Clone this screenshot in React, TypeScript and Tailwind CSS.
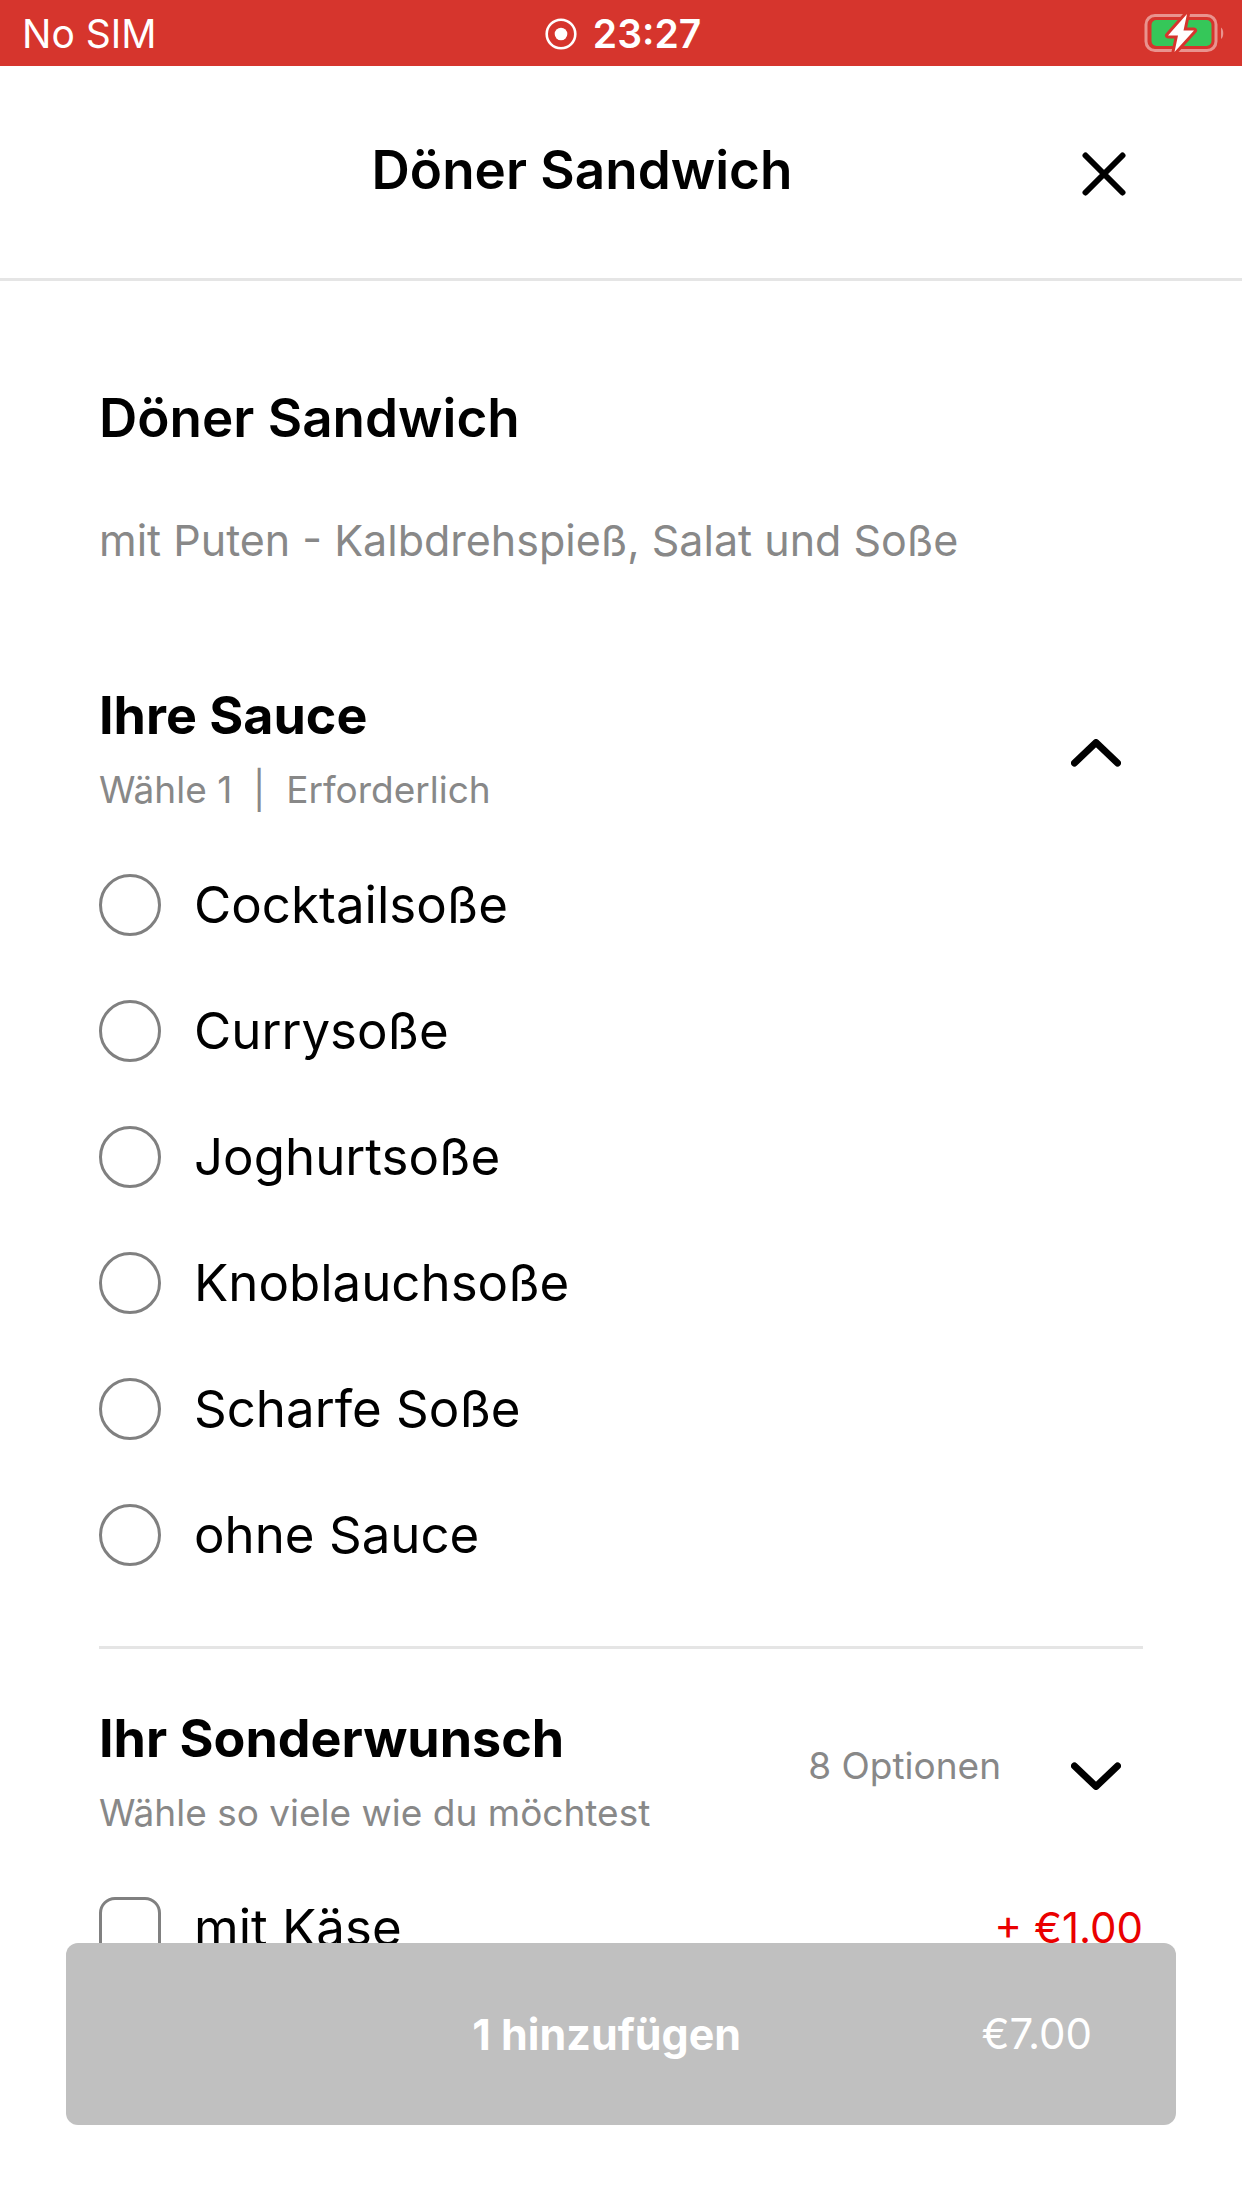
import { useState } from "react"

const sauces = [
    "Cocktailsoße",
    "Currysoße",
    "Joghurtsoße",
    "Knoblauchsoße",
    "Scharfe Soße",
    "ohne Sauce",
]

const StatusBar = () => {
    return (
        <div className="grid h-[66px] grid-cols-3 items-center bg-[#d6352d] pt-[2px] pl-[22px] pr-[18px] text-[39px] leading-[44px] text-white">
            <span>No SIM</span>
            <span className="flex items-center justify-center gap-4 font-semibold">
                <svg className="size-8" viewBox="0 0 32 32" aria-hidden="true">
                    <circle cx="16" cy="16" r="14.3" fill="none" stroke="white" strokeWidth="2.6" />
                    <circle cx="16" cy="16" r="6.3" fill="white" />
                </svg>
                23:27
            </span>
            <Battery />
        </div>
    )
}

const Battery = () => {
    return (
        <svg className="h-10 w-20 justify-self-end" viewBox="0 0 80 40" aria-hidden="true">
            <rect x="2" y="1.500" width="70" height="35" rx="9" fill="none" stroke="#e9938e" strokeWidth="3" />
            <path d="M77 13.500C80 15.500 80 23 77 25Z" fill="#e9938e" />
            <rect x="7.500" y="6" width="60" height="26" rx="5" fill="#35c759" />
            <path
                d="M43 0L24 21.500H34L30.500 38L50 16.500H39.500Z"
                fill="white"
                stroke="#d6352d"
                strokeWidth="6"
                strokeLinejoin="round"
                paintOrder="stroke"
            />
        </svg>
    )
}

const Chevron = ({ open }: { open: boolean }) => {
    return (
        <svg className="h-[28px] w-[50px]" viewBox="0 0 50 28" fill="none" stroke="black" strokeWidth="7" strokeLinecap="round" strokeLinejoin="round" aria-hidden="true">
            {open ? <path d="M3.500 24L25 3.500L46.500 24" /> : <path d="M3.500 4L25 24.500L46.500 4" />}
        </svg>
    )
}

type SectionHeaderProps = {
    title: string
    hint: string
    open: boolean
    count?: string
}

const SectionHeader = ({ title, hint, open, count }: SectionHeaderProps) => {
    return (
        <div className="flex items-center">
            <div className="flex-1">
                <h3 className="text-[52px] leading-[64px] font-bold">{title}</h3>
                <p className="mt-5 text-[37px] leading-[44px] whitespace-pre text-[#888888]">{hint}</p>
            </div>
            {count && <span className="pb-[10px] text-[37px] leading-[44px] text-[#888888]">{count}</span>}
            <button type="button" aria-label={title} aria-expanded={open} className="ml-12 flex w-[94px] justify-center pt-[10px]">
                <Chevron open={open} />
            </button>
        </div>
    )
}

const App = () => {
    const [sauce, setSauce] = useState("")

    return (
        <div className="min-h-screen bg-white font-[Inter,'Liberation_Sans',sans-serif] text-black">
            <StatusBar />
            <header className="flex items-center border-b-[3px] border-[#e5e5e5] px-[99px] py-[67px]">
                <h1 className="flex-1 pb-1 text-center text-[53px] leading-[64px] font-semibold">Döner Sandwich</h1>
                <button type="button" aria-label="Schließen" className="flex size-[78px] items-center justify-center pt-1">
                    <svg className="size-11" viewBox="0 0 44 44" stroke="black" strokeWidth="6" strokeLinecap="round" aria-hidden="true">
                        <path d="M3.500 3.500L40.500 40.500M40.500 3.500L3.500 40.500" />
                    </svg>
                </button>
            </header>

            <main className="px-[99px] pt-[105px]">
                <h2 className="text-[53px] leading-[64px] font-semibold">Döner Sandwich</h2>
                <p className="mt-[66px] text-[43px] leading-[48px] text-[#888888]">mit Puten - Kalbdrehspieß, Salat und Soße</p>

                <section className="mt-[120px] border-b-[3px] border-[#e5e5e5] pb-20">
                    <SectionHeader title="Ihre Sauce" hint="Wähle 1  |  Erforderlich" open />
                    <div className="mt-[62px] flex flex-col gap-16">
                        {sauces.map((name) => (
                            <label key={name} className="flex items-center gap-[33px] text-[51px] leading-[62px]">
                                <input
                                    type="radio"
                                    name="sauce"
                                    checked={sauce === name}
                                    onChange={() => setSauce(name)}
                                    className="size-[62px] appearance-none rounded-full border-3 border-[#808080] checked:border-[16px] checked:border-black"
                                />
                                {name}
                            </label>
                        ))}
                    </div>
                </section>

                <section className="mt-[58px]">
                    <SectionHeader title="Ihr Sonderwunsch" hint="Wähle so viele wie du möchtest" open={false} count="8 Optionen" />
                    <div className="mt-[62px] flex items-center justify-between">
                        <label className="flex items-center gap-[33px] text-[51px] leading-[62px]">
                            <input type="checkbox" className="size-[62px] appearance-none rounded-2xl border-3 border-[#808080] checked:bg-black" />
                            mit Käse
                        </label>
                        <span className="text-[42px] leading-[62px] text-[#ea0000]">+ €1.00</span>
                    </div>
                </section>
            </main>

            <footer className="fixed inset-x-0 bottom-0 px-[66px] pb-[83px]">
                <button type="button" className="flex w-full items-center rounded-xl bg-[#c0c0c0] py-[67px] pr-[84px] pl-[166px] text-[43px] leading-[48px] text-white">
                    <span className="flex-1 text-center font-bold">1 hinzufügen</span>
                    <span className="text-[42px]">€7.00</span>
                </button>
            </footer>
        </div>
    )
}

export default App
